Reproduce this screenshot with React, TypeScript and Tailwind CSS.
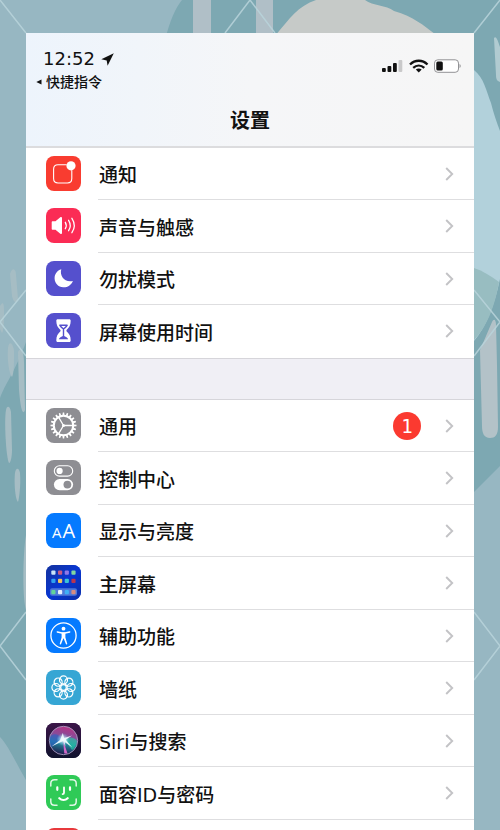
import type { ReactNode } from "react";

type Item = {
  label: string;
  tile: string;
  icon: ReactNode;
  badge?: number;
};

const stroke = { fill: "none", stroke: "#fff", strokeLinecap: "round", strokeLinejoin: "round" } as const;

function Glyph({ children }: { children: ReactNode }) {
  return (
    <svg viewBox="0 0 35 35" className="size-full" aria-hidden="true">
      {children}
    </svg>
  );
}

const notificationIcon = (
  <Glyph>
    <path {...stroke} strokeWidth="1.1" d="M20.3 8.8H12c-3 0-4.4 1.4-4.4 4.400v9.400c0 3 1.400 4.400 4.400 4.400h9.400c3 0 4.400-1.400 4.400-4.400v-8" />
    <circle cx="25" cy="9.8" r="4.6" fill="#fff" />
  </Glyph>
);

const soundIcon = (
  <Glyph>
    <path fill="#fff" d="M5.700 14.200c0-.6.400-1 1-1h2.800l4.800-3.900c.9-.7 1.700-.4 1.700.6v15.200c0 1-.8 1.300-1.700.6l-4.800-3.900H6.700c-.6 0-1-.4-1-1z" />
    <path {...stroke} strokeWidth="1.300" d="M19.300 14.300c1.200 2 1.200 4.400 0 6.400M22.600 12.300c2 3.200 2 7.200 0 10.400M25.900 10.300c2.900 4.400 2.900 10 0 14.400" />
  </Glyph>
);

const moonIcon = (
  <Glyph>
    <path fill="#fff" d="M15.300 8.200c-2 6.600 3.200 13.500 11.600 11.700-1.800 4.400-5.700 6.700-9.700 6.400-5-.4-8.500-4.200-8.600-8.900-.1-4.400 2.600-8 6.700-9.200z" />
  </Glyph>
);

const hourglassIcon = (
  <Glyph>
    <path fill="#fff" d="M11.700 6.300h11.600c.9 0 1.400.6 1.400 1.500 0 4.300-1.400 6.500-3.700 8.700-.8.800-.8 1.500 0 2.300 2.300 2.200 3.700 4.400 3.700 8.700 0 .9-.5 1.500-1.400 1.500H11.700c-.9 0-1.400-.6-1.400-1.500 0-4.300 1.400-6.500 3.700-8.700.8-.8.800-1.500 0-2.300-2.300-2.200-3.700-4.400-3.700-8.700 0-.9.500-1.500 1.400-1.500z" />
    <path fill="none" stroke="#5550cd" strokeWidth="1.400" strokeLinecap="round" strokeLinejoin="round" d="M13.800 12.300c1 2 2.700 2.500 3.700 3.700 1-1.200 2.700-1.700 3.700-3.700zM17.500 16v8.500" />
    <path fill="#5550cd" d="M12.800 26.300c.4-1.500 2.500-2.400 4.700-3.500 2.200 1.100 4.300 2 4.700 3.500z" />
  </Glyph>
);

const gearIcon = (
  <Glyph>
    {Array.from({ length: 20 }, (_, i) => (
      <path key={i} fill="#fff" d="M16.400 7.500 16.800 4.500h1.400l.4 3z" transform={`rotate(${i * 18} 17.500 17.500)`} />
    ))}
    <circle cx="17.500" cy="17.500" r="9.700" fill="none" stroke="#fff" strokeWidth="2" />
    <path {...stroke} strokeWidth="1.300" d="M17.500 17.500H27M17.500 17.500l-4.800-8.200M17.500 17.500l-4.800 8.200" />
    <circle cx="17.500" cy="17.500" r="1.500" fill="#fff" />
  </Glyph>
);

const controlIcon = (
  <Glyph>
    <rect x="8.300" y="5.800" width="18.400" height="10.300" rx="5.150" {...stroke} strokeWidth="1.100" />
    <circle cx="13.600" cy="10.950" r="3.100" fill="#fff" />
    <rect x="7.900" y="19" width="19.200" height="11.200" rx="5.600" fill="#fff" />
    <circle cx="21.400" cy="24.600" r="3.900" fill="#8e8e93" />
  </Glyph>
);

const textSizeIcon = (
  <span className="flex items-baseline justify-center gap-px font-['Open_Sans','Liberation_Sans',sans-serif] text-white">
    <span className="text-[15px] leading-9">A</span>
    <span className="text-[20px] leading-9">A</span>
  </span>
);

const appDots = [
  ["#c9e3f7", "#c75a86", "#8f78e8", "#82d6a0"],
  ["#2fa0f0", "#f2c55c", "#3cc3d6", "#b8354f"],
  ["#62d39a", "#e6effb", "#3fb0f5", "#d58c80"],
];

const homeScreenIcon = (
  <Glyph>
    <defs>
      <linearGradient id="home" x1="0" y1="0" x2="1" y2="1">
        <stop offset="0" stopColor="#15329a" />
        <stop offset=".5" stopColor="#0836d2" />
        <stop offset="1" stopColor="#0a2fa8" />
      </linearGradient>
    </defs>
    <rect width="35" height="35" fill="url(#home)" />
    <rect x="4" y="23.300" width="27" height="7.500" rx="2" fill="#4f78d8" />
    {appDots.map((row, r) =>
      row.map((color, c) => (
        <rect key={`${r}-${c}`} x={5.3 + c * 6.7} y={[5.5, 13.7, 25][r]} width="4.200" height="4.200" rx="1" fill={color} />
      )),
    )}
  </Glyph>
);

const accessibilityIcon = (
  <Glyph>
    <circle cx="17.500" cy="17.500" r="12.600" {...stroke} strokeWidth="1.300" />
    <circle cx="17.500" cy="10.700" r="1.900" fill="#fff" />
    <path {...stroke} strokeWidth="1.500" d="M11.300 14l4.700 1h3l4.700-1" />
    <path fill="#fff" d="M15.600 14.600h3.800v5l1.800 6c.2 1-.9 1.300-1.300.4l-2.200-5.400h-.4L15.100 26c-.4.9-1.500.6-1.300-.4l1.800-6z" />
  </Glyph>
);

const wallpaperIcon = (
  <Glyph>
    {Array.from({ length: 8 }, (_, i) => (
      <circle key={i} cx="17.500" cy="9.900" r="4" {...stroke} strokeWidth="1.200" transform={`rotate(${i * 45} 17.500 17.500)`} />
    ))}
    <circle cx="17.500" cy="17.500" r="2.800" {...stroke} strokeWidth="1.200" />
  </Glyph>
);

const siriIcon = (
  <Glyph>
    <defs>
      <linearGradient id="siriTile" x1="0" y1="0" x2="0" y2="1">
        <stop offset="0" stopColor="#3b1548" />
        <stop offset="1" stopColor="#10132e" />
      </linearGradient>
      <linearGradient id="siriOrb" x1=".6" y1="0" x2=".4" y2="1">
        <stop offset="0" stopColor="#b83284" />
        <stop offset=".38" stopColor="#80509c" />
        <stop offset=".6" stopColor="#22869c" />
        <stop offset="1" stopColor="#1f1548" />
      </linearGradient>
      <radialGradient id="siriGlow">
        <stop offset="0" stopColor="#fff" />
        <stop offset=".35" stopColor="#d8f6ff" stopOpacity=".7" />
        <stop offset="1" stopColor="#7cd5ee" stopOpacity="0" />
      </radialGradient>
    </defs>
    <rect width="35" height="35" fill="url(#siriTile)" />
    <circle cx="17.500" cy="17.500" r="14.200" fill="url(#siriOrb)" stroke="#a89ac0" strokeWidth=".9" />
    <path fill="#2a63c8" opacity=".6" d="M4 14c3-4 8-4 13 3L5.500 24C3.700 20.500 3.500 17 4 14z" />
    <path fill="#25c9a6" opacity=".65" d="M18 16c6-3 11-1 13 2-1 5-3 8-5 9z" />
    <path fill="#e46ad0" opacity=".9" d="M17 17l4.500 13.500h-3.200z" />
    <circle cx="17" cy="16.500" r="6.500" fill="url(#siriGlow)" />
    <path fill="#effcff" opacity=".9" d="M16.800 10l1.300 5 7.900-2.500-6.200 4.300 6.500 7.700-7.600-5.500.8 5-2.300-6L5.500 23.500l8.600-6.500z" />
  </Glyph>
);

const faceIcon = (
  <Glyph>
    <path {...stroke} strokeWidth="1.500" strokeOpacity=".85" d="M4.800 11V8.600c0-2.700 1.100-3.800 3.800-3.800H11M24 4.800h2.400c2.700 0 3.800 1.100 3.800 3.800V11M30.200 24v2.400c0 2.700-1.100 3.800-3.800 3.800H24M11 30.200H8.600c-2.700 0-3.800-1.100-3.800-3.800V24" />
    <path {...stroke} strokeWidth="2.200" d="M11.300 12.400v2.400M24 12.400v2.400M13.300 23.200c2.400 2.200 6 2.200 8.400 0" />
    <path {...stroke} strokeWidth="1.800" d="M18 12.400v5.300c0 1-.4 1.400-1.400 1.400" />
  </Glyph>
);

const alerts: Item[] = [
  { label: "通知", tile: "bg-[#f93c30]", icon: notificationIcon },
  { label: "声音与触感", tile: "bg-[#fb2c55]", icon: soundIcon },
  { label: "勿扰模式", tile: "bg-[#5550cd]", icon: moonIcon },
  { label: "屏幕使用时间", tile: "bg-[#5550cd]", icon: hourglassIcon },
];

const system: Item[] = [
  { label: "通用", tile: "bg-[#8e8e93]", icon: gearIcon, badge: 1 },
  { label: "控制中心", tile: "bg-[#8e8e93]", icon: controlIcon },
  { label: "显示与亮度", tile: "bg-[#057aff]", icon: textSizeIcon },
  { label: "主屏幕", tile: "bg-[#0836d2]", icon: homeScreenIcon },
  { label: "辅助功能", tile: "bg-[#057aff]", icon: accessibilityIcon },
  { label: "墙纸", tile: "bg-[#36a6d4]", icon: wallpaperIcon },
  { label: "Siri与搜索", tile: "bg-[#20143c]", icon: siriIcon },
  { label: "面容ID与密码", tile: "bg-[#2fca57]", icon: faceIcon },
  { label: "", tile: "bg-[#e8393c]", icon: null },
];

function Group({ items }: { items: Item[] }) {
  return (
    <ul className="bg-white">
      {items.map(({ label, tile, icon, badge }) => (
        <li key={label} className="group odd:h-[52px] even:h-[53px]">
          <button type="button" className="flex h-full w-full items-stretch pl-5 text-left">
            <span className={`mt-2 grid size-[35px] shrink-0 overflow-hidden rounded-lg ${tile}`}>{icon}</span>
            <span className="ml-[17px] flex flex-1 items-center border-b border-[#dedee0] pr-5 group-last:border-transparent">
              <span className="flex-1 pt-[3px] pl-px text-[19px] leading-7 font-medium text-[#111]">{label}</span>
              {badge !== undefined && (
                <span className="mr-6 grid size-7 place-items-center rounded-full bg-[#fb3a30] font-['DejaVu_Sans_Mono',monospace] text-[19px] leading-7 text-white">
                  {badge}
                </span>
              )}
              <svg viewBox="0 0 9 14" className="h-3.5 w-[9px]" aria-hidden="true">
                <path d="M1.200 1l6 6-6 6" fill="none" stroke="#c3c3c6" strokeWidth="1.900" />
              </svg>
            </span>
          </button>
        </li>
      ))}
    </ul>
  );
}

function Backdrop() {
  return (
    <svg viewBox="0 0 500 830" preserveAspectRatio="xMidYMin slice" className="h-screen w-full [grid-area:1/1]" aria-hidden="true">
      <rect width="500" height="830" fill="#97b7c2" />
      <path fill="#7da8b2" d="M182 0H500V466L474 492V40H165Q172 12 182 0z" />
      <path fill="#b0bfc7" d="M193 0h18v36h-18zM256 0h17v36h-17z" />
      <path fill="#c6cac8" d="M275 36C290 18 298 6 316 0h49c8 6 21 5 29 11 20 6 29 14 41 23v2z" />
      <path fill="#b2d1db" d="M474 70c10 8 12 20 17 33 3 12 6 20 9 28v148c-6 28-14 48-26 62z" />
      <path fill="#98bdc1" d="M474 268c9 3 17 8 25 14-5 28-13 45-25 58z" />
      <path fill="#b1cbd1" d="M494 38c2-3 4 3 6 9v35c-3-1-4-3-4-7z" />
      <path fill="#b3c2c8" d="M480 350l12-28c2-4 4-2 4 3l1 40 1 62c0 8-3 11-8 11-6 0-8-5-8-12z" />
      <path fill="#7da8b2" d="M0 398c5-14 14-24 26-56v438C16 763 8 745 0 737z" />
      <g fill="#a6bdc4">
        <path d="M10 274c2-7 6-6 6 1l2 24c-2 6-5 2-6-3z" />
        <path d="M0 306c3-5 4-3 4 5 0 8 0 20-2 22l-2-4z" />
        <path d="M8 348c1-8 5-5 6 3 0 12 0 22-2 26-3-3-5-18-4-29z" />
        <path d="M18 352c3-7 6 0 6 10l1 48c-3 8-5-8-6-20z" />
        <path d="M6 410c1-5 4-4 5 2l1 38c0 8-2 14-3 13-3-5-5-43-3-53z" />
        <path d="M15 473c1-6 4-5 5 0 1 12-1 26-2 29-3-3-4-20-3-29z" />
        <path d="M26 535c-3 17-4 62 0 75z" />
      </g>
      <g fill="none" stroke="#b8d3da" strokeWidth="1.500" strokeOpacity=".85">
        <path d="M0 0l26 33M225 33L250 0l25 33M500 0l-26 33" />
        <path d="M26 290L0 322l26 34M474 290l26 32-26 34" />
        <path d="M26 612L0 646l26 34M474 612l26 34-26 34" />
      </g>
    </svg>
  );
}

function StatusIcons() {
  return (
    <svg viewBox="0 0 80 16" className="mt-[11px] h-4 w-20" role="img" aria-label="信号、无线网络和电量">
      <g fill="#111">
        <rect x="1" y="10" width="3.800" height="4" rx="1" />
        <rect x="6.500" y="8" width="3.800" height="6" rx="1" />
        <rect x="12" y="5" width="3.800" height="9" rx="1" />
        <rect x="17.500" y="2" width="3.800" height="12" rx="1" fill="#c9c9ca" />
      </g>
      <g fill="none" stroke="#111" strokeWidth="2.300">
        <path d="M29 6.500c5-5 12.500-5 17.500 0" />
        <path d="M32.200 9.800c3.300-3 7.800-3 11.100 0" />
      </g>
      <path fill="#111" d="M34.800 11.600c1.800-1.500 4.100-1.500 5.900 0L37.750 14.500z" />
      <rect x="53.500" y="1.800" width="24" height="12.500" rx="3.300" fill="#fff" stroke="#929295" />
      <rect x="55.300" y="3.600" width="6.500" height="9" rx="1.500" fill="#111" />
      <path fill="#77777a" d="M78.600 6c1.300.8 1.300 3.200 0 4z" />
    </svg>
  );
}

export default function App() {
  return (
    <div className="grid h-screen overflow-hidden font-['DejaVu_Sans','Noto_Sans_CJK_SC',sans-serif]">
      <Backdrop />
      <div className="mx-[26px] mt-[33px] bg-[#f0eff5] [grid-area:1/1]">
        <header className="border-b-2 border-[#dcdcde] bg-linear-to-r from-[#edf4fc] via-[#f5f6f8] to-[#f6f6f6] pt-3.5 pb-[11px] text-[#111]">
          <div className="flex items-start justify-between pr-[13px] pl-2.5">
            <div>
              <div className="flex items-center gap-1.5 pl-[7px] text-[18px] leading-6">
                <time>12:52</time>
                <svg viewBox="0 0 13 13" className="size-[13px]" aria-hidden="true">
                  <path fill="#111" d="M12.800.2L.3 6.200l5.400 1.300.9 5.200z" />
                </svg>
              </div>
              <button type="button" className="mt-px flex items-center gap-1 text-[14px] leading-5 font-medium">
                <svg viewBox="0 0 6 6" className="size-1.5" aria-hidden="true">
                  <path fill="#111" d="M.3 3L5.500.4v5.200z" />
                </svg>
                快捷指令
              </button>
            </div>
            <StatusIcons />
          </div>
          <h1 className="mt-[15px] text-center text-[20px] leading-7 font-bold">设置</h1>
        </header>
        <main>
          <Group items={alerts} />
          <div className="h-[42px] border-y border-[#d6d5da]" />
          <Group items={system} />
        </main>
      </div>
    </div>
  );
}
